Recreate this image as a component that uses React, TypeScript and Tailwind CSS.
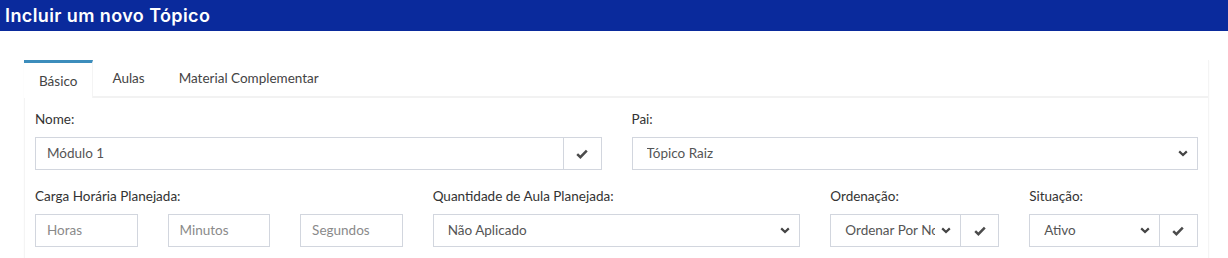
import React from "react";

const Check = () => (
  <svg width="12" height="10" viewBox="0 0 12 10" className="block">
    <path d="M1.2 5.2 L4.4 8.2 L10.8 1.6" fill="none" stroke="#4b4b4b" strokeWidth="2.5" strokeLinecap="butt" strokeLinejoin="miter" />
  </svg>
);

const Chevron = () => (
  <svg width="10" height="7" viewBox="0 0 10 7" className="block">
    <path d="M1.2 1.4 L5 5 L8.8 1.4" fill="none" stroke="#444" strokeWidth="2.2" />
  </svg>
);

const Label = ({ children }: { children: React.ReactNode }) => (
  <div className="text-[13.5px] text-[#333] leading-[17px] mb-[9px]">{children}</div>
);

const TextBox = ({ text, placeholder }: { text?: string; placeholder?: boolean }) => (
  <div
    className={`h-[33px] border border-[#d2d6de] flex items-center pl-[11px] text-[13.5px] ${
      placeholder ? "text-[#8a8a8a]" : "text-[#555]"
    } bg-white`}
  >
    {text}
  </div>
);

const SelectBox = ({ text, className = "" }: { text: string; className?: string }) => (
  <div className={`h-[33px] border border-[#d2d6de] flex items-center pl-[14px] pr-[9px] text-[13.5px] text-[#555] bg-white min-w-0 ${className}`}>
    <div className="flex-1 min-w-0 overflow-hidden whitespace-nowrap">{text}</div>
    <div className="shrink-0 pl-[6px]">
      <Chevron />
    </div>
  </div>
);

const Addon = () => (
  <div className="w-[38px] shrink-0 h-[33px] border border-l-0 border-[#d2d6de] flex items-center justify-center bg-white">
    <Check />
  </div>
);

export default function App() {
  return (
    <div className="w-[1228px] h-[258px] bg-white overflow-hidden" style={{ fontFamily: '"Source Sans Pro", Lato, "Liberation Sans", sans-serif' }}>
      <div className="h-[31px] bg-[#0a2a9c] flex items-center pl-[5px]">
        <div className="text-white text-[18px] font-semibold tracking-[0.4px]" style={{ fontFamily: 'Inter, "Open Sans", sans-serif' }}>
          Incluir um novo Tópico
        </div>
      </div>
      <div className="pt-[29px] pl-[24px] pr-[19px]">
        <div className="border-l border-r border-[#f4f4f4] shadow-[0_1px_1px_rgba(0,0,0,0.05)]">
          <div className="flex gap-[5px] border-b-2 border-[#f2f2f2] h-[38px]">
            <div className="px-[15px] pt-[1px] border-t-[3px] border-[#3c8dbc] flex items-center text-[13.5px] text-[#444] bg-white -mb-[2px] border-r border-r-[#f4f4f4] -ml-px">
              Básico
            </div>
            <div className="px-[14px] flex items-center text-[13.5px] text-[#444]">Aulas</div>
            <div className="px-[15px] flex items-center text-[13.5px] text-[#444]">Material Complementar</div>
          </div>
          <div className="pl-[10px] pr-[10px] pt-[13px] pb-[20px]">
            <div className="grid grid-cols-12 gap-x-[30px]">
              <div className="col-span-6">
                <Label>Nome:</Label>
                <div className="flex">
                  <div className="flex-1 min-w-0">
                    <TextBox text="Módulo 1" />
                  </div>
                  <Addon />
                </div>
              </div>
              <div className="col-span-6">
                <Label>Pai:</Label>
                <SelectBox text="Tópico Raiz" />
              </div>
            </div>
            <div className="grid grid-cols-12 gap-x-[30px] mt-[18px]">
              <div className="col-span-4">
                <Label>Carga Horária Planejada:</Label>
                <div className="grid grid-cols-3 gap-x-[30px]">
                  <TextBox text="Horas" placeholder />
                  <TextBox text="Minutos" placeholder />
                  <TextBox text="Segundos" placeholder />
                </div>
              </div>
              <div className="col-span-4">
                <Label>Quantidade de Aula Planejada:</Label>
                <SelectBox text="Não Aplicado" />
              </div>
              <div className="col-span-2">
                <Label>Ordenação:</Label>
                <div className="flex">
                  <SelectBox text="Ordenar Por Nome" className="flex-1" />
                  <Addon />
                </div>
              </div>
              <div className="col-span-2">
                <Label>Situação:</Label>
                <div className="flex">
                  <SelectBox text="Ativo" className="flex-1" />
                  <Addon />
                </div>
              </div>
            </div>
          </div>
        </div>
      </div>
    </div>
  );
}
